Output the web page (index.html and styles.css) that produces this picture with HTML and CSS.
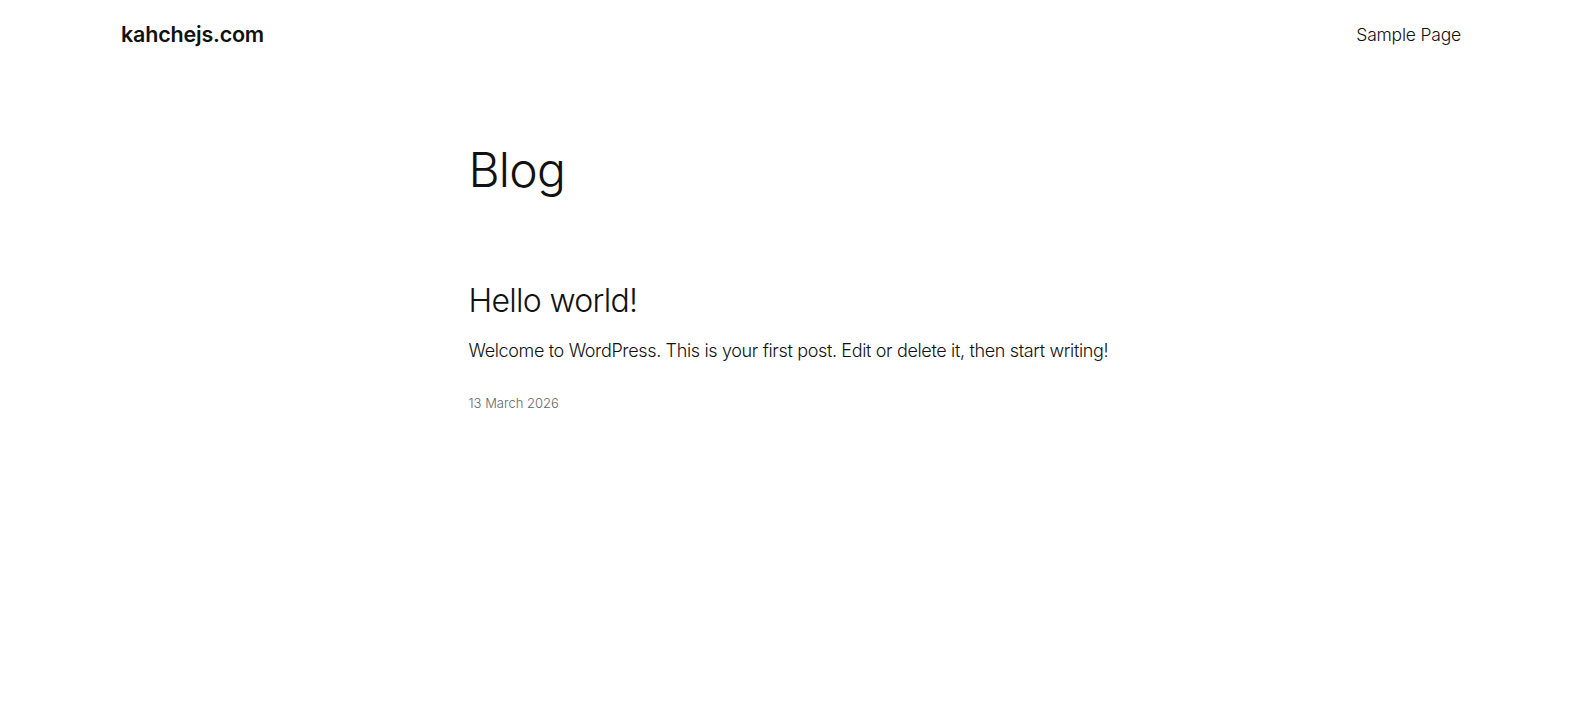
FILE: index.html
```html
<!DOCTYPE html>
<html lang="en">
<head>
<meta charset="utf-8">
<title>Blog – kahchejs.com</title>
<link rel="stylesheet" href="styles.css">
</head>
<body>
<header class="site-header">
  <a class="site-title" href="#">kahchejs.com</a>
  <nav class="site-nav"><a href="#">Sample Page</a></nav>
</header>
<main class="content">
  <h1 class="page-title">Blog</h1>
  <article class="post">
    <h2 class="post-title">Hello world!</h2>
    <p class="post-excerpt">Welcome to WordPress. This is your first post. Edit or delete it, then start writing!</p>
    <div class="post-date">13 March 2026</div>
  </article>
</main>
</body>
</html>
```

FILE: styles.css
```css
html, body {
  margin: 0;
  padding: 0;
  background: #ffffff;
  color: #111111;
  font-family: Inter, "Noto Sans", "Liberation Sans", sans-serif;
}
a { color: inherit; text-decoration: none; }

.site-header {
  width: 1340px;
  margin: 0 auto;
  display: flex;
  justify-content: space-between;
  align-items: center;
  padding-top: 22px;
}
.site-title {
  font-size: 21.5px;
  font-weight: 600;
  line-height: 1.2;
  letter-spacing: -0.2px;
}
.site-nav {
  font-size: 17.5px;
  font-weight: 300;
  line-height: 1.2;
  letter-spacing: -0.2px;
}

.content {
  width: 645px;
  margin: 0 auto;
}
.page-title {
  margin: 93px 0 0;
  font-size: 48px;
  font-weight: 300;
  line-height: 1.2;
  letter-spacing: -0.8px;
}
.post { margin-top: 84px; }
.post-title {
  margin: 0;
  font-size: 32px;
  font-weight: 300;
  line-height: 1.2;
  letter-spacing: -0.7px;
}
.post-excerpt {
  margin: 16px 0 0;
  font-size: 18px;
  font-weight: 300;
  line-height: 1.5;
  letter-spacing: -0.35px;
}
.post-date {
  margin-top: 30px;
  font-size: 13px;
  font-weight: 300;
  line-height: 1.5;
  color: #666666;
}
```
